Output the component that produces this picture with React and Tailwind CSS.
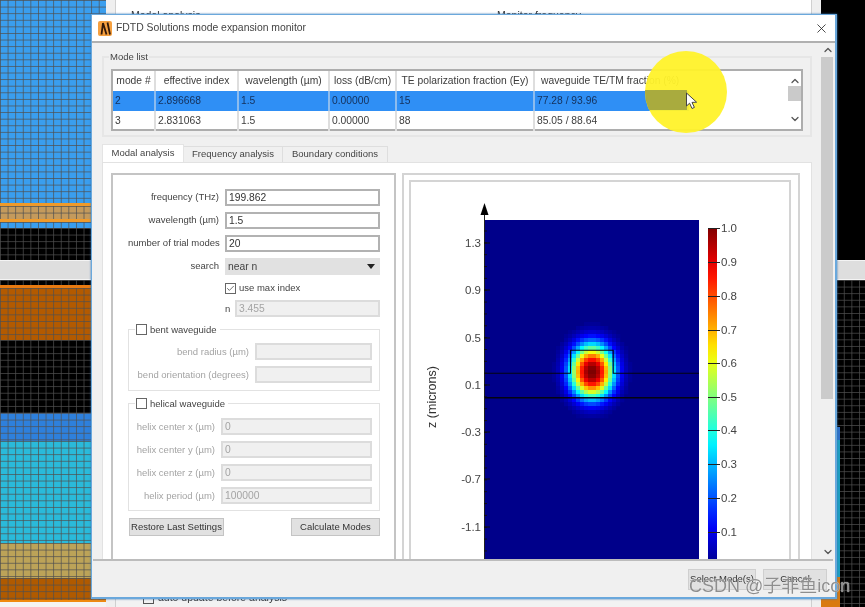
import React from "react";
import { ChevronUp, ChevronDown, X, Check } from "lucide-react";

const clamp = (v) => Math.max(0, Math.min(1, v));
const jet = (v) => {
  const r = clamp(1.5 - Math.abs(4 * v - 3));
  const g = clamp(1.5 - Math.abs(4 * v - 2));
  const b = clamp(1.5 - Math.abs(4 * v - 1));
  return `rgb(${Math.round(r * 255)},${Math.round(g * 255)},${Math.round(b * 255)})`;
};

function Heat() {
  const cells = [];
  for (let y = 322; y < 416; y += 4) {
    for (let x = 552; x < 634; x += 4) {
      const dx = (x + 2 - 592) / 21.5;
      const dy = (y + 2 - 372) / (y < 372 ? 27 : 26);
      const v = Math.exp(-Math.pow(dx * dx + dy * dy, 1.2));
      if (v > 0.015) cells.push(<rect key={x + "-" + y} x={x} y={y} width={4.2} height={4.2} fill={jet(v + 0.005)} />);
    }
  }
  return <g filter="url(#soft)">{cells}</g>;
}

function Plot() {
  const left = [["1.3", 243], ["0.9", 290], ["0.5", 338], ["0.1", 385], ["-0.3", 432], ["-0.7", 479], ["-1.1", 527]];
  const bar = [["1.0", 228], ["0.9", 262], ["0.8", 296], ["0.7", 330], ["0.6", 363], ["0.5", 397], ["0.4", 430], ["0.3", 464], ["0.2", 498], ["0.1", 532]];
  const minor = [];
  for (let y = 231; y < 560; y += 11.85) minor.push(y);
  const stops = [];
  for (let i = 0; i <= 20; i++) stops.push(<stop key={i} offset={i / 20} stopColor={jet(1 - (i / 20) * 0.983)} />);
  return (
    <svg viewBox="411 182 378 380" className="block w-[378px] h-[380px]">
      <defs>
        <filter id="soft" x="-10%" y="-10%" width="120%" height="120%"><feGaussianBlur stdDeviation="0.6" /></filter>
        <linearGradient id="jetbar" x1="0" y1="0" x2="0" y2="1">{stops}</linearGradient>
      </defs>
      <rect x="484" y="220" width="215" height="342" fill="#00008a" />
      <Heat />
      <path d="M484 373.3H570.5V350.3H613.2V373.3H699" fill="none" stroke="#050510" strokeWidth="1.1" />
      <path d="M484 397.7H699" stroke="#050510" strokeWidth="1.5" />
      <path d="M484.5 214V562" stroke="#222" strokeWidth="1" />
      <polygon points="484.5,203 480.5,215 488.5,215" fill="#000" />
      {minor.map((y) => <path key={y} d={`M484 ${y}h3`} stroke="#111" strokeWidth="1" />)}
      {left.map(([t, y]) => (
        <g key={t}>
          <path d={`M484 ${y}h6`} stroke="#111" strokeWidth="1" />
          <text x="481" y={y + 4} textAnchor="end" fontSize="11.5" fill="#444" fontFamily="'Liberation Sans', sans-serif">{t}</text>
        </g>
      ))}
      <text transform="translate(436 397) rotate(-90)" textAnchor="middle" fontSize="12.5" fill="#333" fontFamily="'Liberation Sans', sans-serif">z (microns)</text>
      <rect x="708" y="228" width="9" height="334" fill="url(#jetbar)" />
      {bar.map(([t, y]) => (
        <g key={t}>
          <path d={`M708 ${y + 0.5}h12`} stroke="#222" strokeWidth="1" />
          <text x="721" y={y + 4} fontSize="11.5" fill="#444" fontFamily="'Liberation Sans', sans-serif">{t}</text>
        </g>
      ))}
    </svg>
  );
}

function Row({ label, value, labelW, active = true, h = "h-[17px]" }) {
  return (
    <div className="flex items-center gap-[6px]">
      <span className={`${labelW} text-right whitespace-nowrap ${active ? "text-[#444]" : "text-[#a4a4a4]"}`}>{label}</span>
      <div className={`${h} flex-1 px-[2px] flex items-center text-[10.3px] ${active ? "border-2 border-[#b2b2b2] bg-white text-[#333]" : "border-2 border-[#dcdcdc] bg-[#f0f0f0] text-[#a4a4a4]"}`}>{value}</div>
    </div>
  );
}

function Box({ checked, className = "" }) {
  return (
    <span className={`w-[11px] h-[11px] shrink-0 border border-[#666] bg-white flex items-center justify-center ${className}`}>
      {checked && <Check size={11} strokeWidth={2} className="text-[#444]" />}
    </span>
  );
}

function Group({ title, className, children }) {
  return (
    <div className={`relative border border-[#e2e2e2] ${className}`}>
      <div className="absolute left-[6px] top-[-6px] bg-white pr-[3px] pl-px flex items-center gap-[3px] text-[#444] leading-none">
        <Box />
        <span>{title}</span>
      </div>
      {children}
    </div>
  );
}

function Cell({ children, head, sep = "border-[#dedede]", className = "" }) {
  return <div className={`h-full flex items-center border-r-2 whitespace-nowrap ${sep} ${head ? "justify-center" : "pl-[2px]"} ${className}`}>{children}</div>;
}

function ModeTable() {
  const cols = "grid grid-cols-[43px_83px_91px_67px_138px_1fr] h-[20px] items-center";
  const sel = "bg-[#2f8ff5] text-[#14305a]";
  return (
    <div className="border-2 border-[#adadad] bg-white flex h-[62px] text-[#3c3c3c] text-[10.3px]">
      <div className="flex-1">
        <div className={cols}>
          <Cell head>mode #</Cell><Cell head>effective index</Cell><Cell head>wavelength (µm)</Cell><Cell head>loss (dB/cm)</Cell><Cell head>TE polarization fraction (Ey)</Cell>
          <div className="pl-[6px] whitespace-nowrap">waveguide TE/TM fraction (%)</div>
        </div>
        <div className={cols}>
          <Cell sep="border-[#8dbcee]" className={sel}>2</Cell>
          <Cell sep="border-[#8dbcee]" className={sel}>2.896668</Cell>
          <Cell sep="border-[#8dbcee]" className={sel}>1.5</Cell>
          <Cell sep="border-[#8dbcee]" className={sel}>0.00000</Cell>
          <Cell sep="border-[#8dbcee]" className={sel}>15</Cell>
          <div className={`h-full w-[154px] pl-[2px] flex items-center ${sel}`}>77.28 / 93.96</div>
        </div>
        <div className={cols}>
          <Cell>3</Cell><Cell>2.831063</Cell><Cell>1.5</Cell><Cell>0.00000</Cell><Cell>88</Cell>
          <div className="pl-[2px]">85.05 / 88.64</div>
        </div>
      </div>
      <div className="w-[13px] flex flex-col items-center justify-between text-[#555] py-[4px] relative">
        <ChevronUp size={12} strokeWidth={2.5} />
        <div className="absolute top-[15px] left-0 w-full h-[15px] bg-[#cacaca]" />
        <ChevronDown size={12} strokeWidth={2.5} />
      </div>
    </div>
  );
}

function FormPanel() {
  return (
    <div className="w-[285px] border-2 border-b-0 border-[#c4c4c4] pl-[15px] pr-[14px] pt-[14px] flex flex-col">
      <div className="flex flex-col gap-[6px]">
        <Row label="frequency (THz)" value="199.862" labelW="w-[91px]" />
        <Row label="wavelength (µm)" value="1.5" labelW="w-[91px]" />
        <Row label="number of trial modes" value="20" labelW="w-[91px]" />
        <div className="flex items-center gap-[6px]">
          <span className="w-[91px] text-right text-[#444]">search</span>
          <div className="h-[17px] flex-1 bg-[#e1e1e1] pl-[3px] pr-[5px] flex items-center justify-between text-[#444] text-[10.3px]">
            near n
            <svg width="8" height="5" viewBox="0 0 8 5"><polygon points="0,0 8,0 4,5" fill="#222" /></svg>
          </div>
        </div>
      </div>
      <div className="flex items-center gap-[3px] ml-[97px] mt-[6px] text-[#444]"><Box checked /><span>use max index</span></div>
      <div className="flex items-center gap-[6px] ml-[97px] mt-[5px]">
        <span className="text-[#444] w-[4px]">n</span>
        <div className="h-[17px] flex-1 border-2 border-[#dcdcdc] bg-[#f0f0f0] px-[2px] flex items-center text-[#a4a4a4] text-[10.3px]">3.455</div>
      </div>
      <Group title="bent waveguide" className="mt-[12px] h-[62px] px-[7px] pt-[13px] flex flex-col gap-[6px]">
        <Row label="bend radius (µm)" value="" labelW="w-[113px]" active={false} />
        <Row label="bend orientation (degrees)" value="" labelW="w-[113px]" active={false} />
      </Group>
      <Group title="helical waveguide" className="mt-[12px] h-[108px] px-[7px] pt-[14px] flex flex-col gap-[6px]">
        <Row label="helix center x (µm)" value="0" labelW="w-[79px]" active={false} />
        <Row label="helix center y (µm)" value="0" labelW="w-[79px]" active={false} />
        <Row label="helix center z (µm)" value="0" labelW="w-[79px]" active={false} />
        <Row label="helix period (µm)" value="100000" labelW="w-[79px]" active={false} />
      </Group>
      <div className="flex justify-between mt-[7px] text-[#333]">
        <button className="w-[95px] h-[18px] ml-px bg-[#e1e1e1] border border-[#c4c4c4] whitespace-nowrap">Restore Last Settings</button>
        <button className="w-[89px] h-[18px] bg-[#e1e1e1] border border-[#c4c4c4] whitespace-nowrap">Calculate Modes</button>
      </div>
    </div>
  );
}

function Dialog() {
  return (
    <div className="absolute left-[91px] top-[14px] w-[746px] h-[585px] border border-[#6aa8dc] border-b-2 border-r-2 bg-[#f0f0f0] flex flex-col shadow-[0_0_2px_#3a78b0] text-[9.5px]">
      <div className="h-[28px] shrink-0 bg-white border-b-2 border-[#b0b0b0] flex items-center pl-[6px] pr-[6px] text-[10.4px] text-[#444]">
        <svg width="14" height="15" viewBox="0 0 14 15" className="mr-[4px]">
          <rect width="14" height="15" rx="2" fill="#f5a040" />
          <path d="M3.5 13.5L5 2M5 2L8.5 13.5M9.5 1.5L12 13.5" fill="none" stroke="#33190a" strokeWidth="1.8" />
        </svg>
        <span className="flex-1">FDTD Solutions mode expansion monitor</span>
        <X size={15} strokeWidth={1.3} className="text-[#222]" />
      </div>
      <div className="flex-1 min-h-0 flex ml-[1px] mr-[2px] border-b-2 border-[#bcbcbc] overflow-hidden">
        <div className="flex-1 pl-[9px] pr-[9px] pt-[13px] flex flex-col">
          <div className="relative border-2 border-[#e6e6e6] h-[81px] pl-[7px] pr-[7px] pt-[11px]">
            <span className="absolute left-[5px] top-[-7px] bg-[#f0f0f0] px-[1px] text-[#444] leading-[12px]">Mode list</span>
            <ModeTable />
          </div>
          <div className="flex items-end h-[18px] mt-[7px] text-[#444]">
            <div className="h-[18px] w-[82px] bg-white border-t border-x border-[#e4e4e4] flex items-center justify-center">Modal analysis</div>
            <div className="h-[16px] w-[99px] border-t border-r border-[#dedede] flex items-center justify-center">Frequency analysis</div>
            <div className="h-[16px] w-[105px] border-t border-r border-[#dedede] flex items-center justify-center">Boundary conditions</div>
          </div>
          <div className="flex-1 min-h-0 bg-white border border-b-0 border-[#e2e2e2] pl-[8px] pr-[11px] pt-[10px] flex gap-[6px]">
            <FormPanel />
            <div className="flex-1 border-2 border-b-0 border-[#d4d4d4] pl-[5px] pr-[7px] pt-[5px]">
              <div className="border-2 border-b-0 border-[#d4d4d4] h-full overflow-hidden"><Plot /></div>
            </div>
          </div>
        </div>
        <div className="w-[14px] shrink-0 flex flex-col items-center text-[#555] relative">
          <div className="h-[14px] flex items-center"><ChevronUp size={12} strokeWidth={2.5} /></div>
          <div className="w-full h-[342px] bg-[#cbcbcb]" />
          <div className="flex-1" />
          <div className="h-[14px] flex items-center"><ChevronDown size={12} strokeWidth={2.5} /></div>
        </div>
      </div>
      <div className="h-[36px] shrink-0 flex justify-end items-start gap-[7px] pt-[8px] pr-[8px] text-[#333]">
        <button className="w-[68px] h-[21px] bg-[#e1e1e1] border border-[#cfcfcf] whitespace-nowrap">Select Mode(s)</button>
        <button className="w-[64px] h-[21px] bg-[#e1e1e1] border border-[#cfcfcf]">Cancel</button>
      </div>
    </div>
  );
}

const gridClass = "bg-[linear-gradient(rgba(80,80,80,0.75)_1px,transparent_1px),linear-gradient(90deg,rgba(80,80,80,0.75)_1px,transparent_1px)] bg-[size:7.6px_6.6px]";

export default function App() {
  return (
    <div className="relative w-[865px] h-[607px] overflow-hidden flex blur-[0.5px] bg-black" style={{ fontFamily: "'Liberation Sans', 'Noto Sans CJK SC', sans-serif" }}>
      <div className="w-[106px] shrink-0 flex flex-col">
        <div className={`h-[203px] bg-[#3a9eee] ${gridClass}`} />
        <div className={`h-[19px] bg-[#c49a5c] border-y-[3px] border-[#ef9a2a] ${gridClass}`} />
        <div className={`h-[6px] bg-[#3a9eee] ${gridClass}`} />
        <div className={`h-[32px] bg-black ${gridClass}`} />
        <div className="h-[20px] bg-[#dedede] border-y border-[#f4f4f4]" />
        <div className={`h-[5px] bg-black ${gridClass}`} />
        <div className={`h-[55px] bg-[#b35a00] border-t-[3px] border-[#e87a10] ${gridClass}`} />
        <div className={`h-[73px] bg-black ${gridClass}`} />
        <div className={`h-[28px] bg-[#2e80dc] ${gridClass}`} />
        <div className={`h-[102px] bg-[#2abada] ${gridClass}`} />
        <div className={`h-[35px] bg-[#bca358] ${gridClass}`} />
        <div className={`h-[22px] bg-[#b05a00] ${gridClass}`} />
        <div className="h-[2px] bg-[#f08a10]" />
        <div className="flex-1 bg-[#f4f4f4]" />
      </div>
      <div className="w-[715px] shrink-0 bg-[#efefef] px-[9px] flex flex-col">
        <div className="flex-1 bg-white border-x border-[#d0d0d0] text-[10.5px] text-[#333] flex pt-[8px] pl-[15px]">
          <span className="w-[366px]">Modal analysis</span>
          <span>Monitor frequency</span>
        </div>
        <div className="h-[15px] bg-[#f2f2f2] pl-[27px] pt-[1px] flex items-start gap-[4px] text-[10.5px] text-[#333] border-x border-[#cfcfcf]">
          <span className="w-[11px] h-[11px] border border-[#555]" />
          <span className="leading-[9px]">auto update before analysis</span>
        </div>
      </div>
      <div className="flex-1 flex flex-col">
        <div className="h-[260px] bg-black" />
        <div className="h-[20px] bg-[#dedede] border-y border-[#f4f4f4]" />
        <div className={`flex-1 bg-black ${gridClass} flex flex-col`}>
          <div className="h-[147px]" />
          <div className="h-[13px] w-[19px] bg-[#2e70c8]" />
          <div className="h-[137px] w-[19px] bg-[#1d9fc0]" />
          <div className="h-[30px] w-[19px] bg-[#d97a10]" />
        </div>
      </div>

      <Dialog />

      <div className="absolute left-[645px] top-[51px] w-[82px] h-[82px] rounded-full overflow-hidden bg-[#fff22a]/95">
        <div className="absolute left-0 top-[39px] w-[42px] h-[20px] bg-[#a9ab3e]" />
      </div>
      <svg className="absolute left-[685px] top-[92px]" width="13" height="18" viewBox="0 0 13 18">
        <path d="M1.5 1L1.5 14L4.6 11.2L7 16.5L9.4 15.4L7 10.4L11.6 10.2Z" fill="#fff" stroke="#444" strokeWidth="1" />
      </svg>
      <div className="absolute left-[689px] top-[576px] text-[18px] leading-[20px] text-[#8e8e8e] whitespace-nowrap [text-shadow:0_0_1px_#fff]">CSDN @子非鱼icon</div>
    </div>
  );
}
